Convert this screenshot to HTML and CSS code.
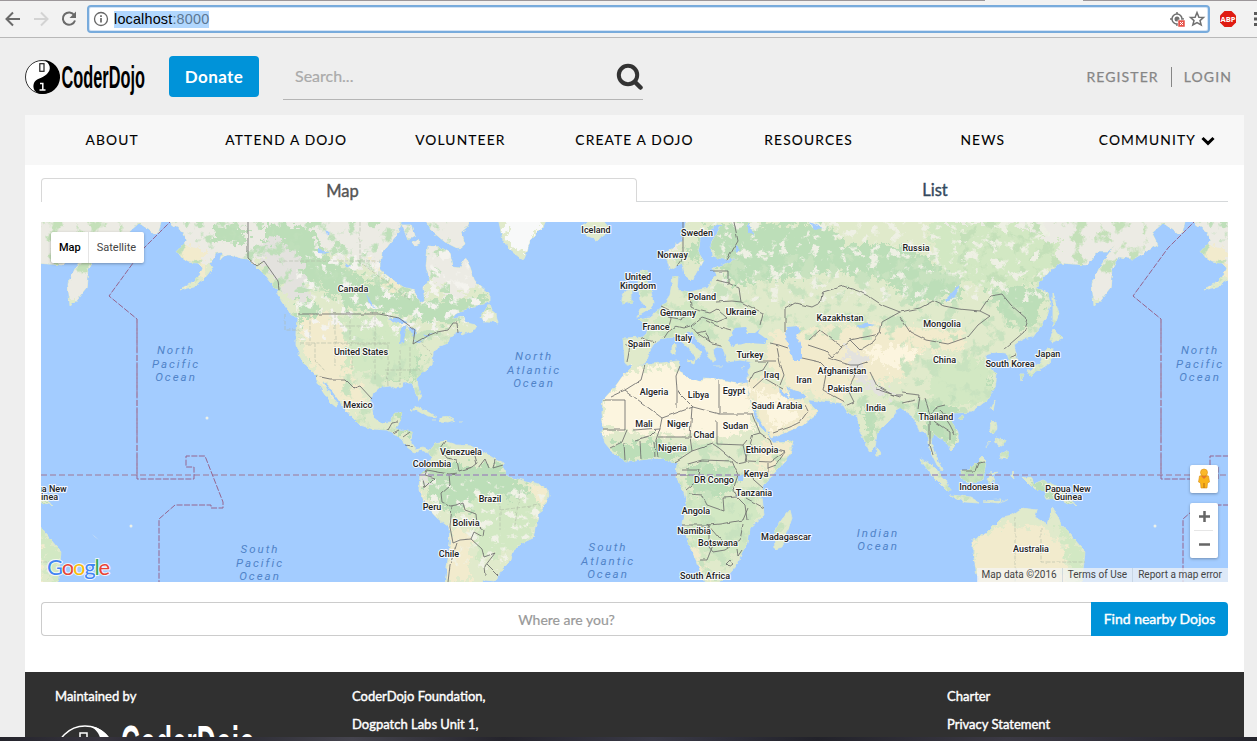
FILE: index.html
```html
<!DOCTYPE html>
<html lang="en">
<head>
<meta charset="utf-8">
<title>CoderDojo</title>
<link rel="stylesheet" href="styles.css">
</head>
<body>
<div class="browser">
  <svg class="nav-icons" width="84" height="36" viewBox="0 0 84 36" fill="none" stroke-width="2">
    <path d="M20 19H7M13 12.500L6.500 19L13 25.500" stroke="#6a6a6a"/>
    <path d="M34 19H47M41 12.500L47.500 19L41 25.500" stroke="#d3d3d3"/>
    <path d="M74.300 15.200A6.200 6.200 0 1 0 75 20.500" stroke="#6a6a6a"/>
    <path d="M76 11.500V18H69.500Z" fill="#6a6a6a"/>
  </svg>
  <div class="address">
    <svg width="16" height="16" viewBox="0 0 16 16" fill="none" stroke="#666"><circle cx="8" cy="8" r="6.500" stroke-width="1.300"/><path d="M8 7V11.500M8 4.300V6" stroke-width="1.700"/></svg>
    <span class="url">localhost<i>:8000</i></span>
    <svg class="address-tools" width="38" height="20" viewBox="0 0 38 20" fill="none" stroke="#707070">
      <circle cx="8" cy="10" r="5" stroke-width="1.500"/><path d="M8 3V5M1 10H3M13 10H15M8 15V17" stroke-width="1.500"/><circle cx="8" cy="10" r="2.500" fill="#707070" stroke="none"/>
      <rect x="9" y="11" width="7" height="7" fill="#e6534a" stroke="#fff" stroke-width=".5"/><path d="M11 13L14 16M14 13L11 16" stroke="#fff"/>
      <path d="M28 3.500L29.900 8.300 34.500 8.500 31 11.600 32.200 16 28 13.500 23.800 16 25 11.600 21.500 8.500 26.100 8.300Z" stroke-width="1.500"/>
    </svg>
  </div>
  <svg class="extensions" width="44" height="36" viewBox="0 0 44 36">
    <path d="M11.500 11H18.500L23 15.500V22.500L18.500 27H11.500L7 22.500V15.500Z" fill="#df1b12"/>
    <text x="15" y="22" class="abp">ABP</text>
    <g fill="#5a5a5a"><rect x="41" y="12" width="3" height="3"/><rect x="41" y="17.500" width="3" height="3"/><rect x="41" y="23" width="3" height="3"/></g>
  </svg>
</div>

<header class="header">
  <svg class="logo" width="122" height="40" viewBox="0 0 122 40">
    <circle cx="17" cy="18" r="16.500" fill="#fff" stroke="#000" stroke-width=".8"/>
    <path d="M19 1A17 17 0 0 1 17 35C10 35 7 29 9 24C11 19 17 20 22 15C27 10 25 4 19 1Z" fill="#000"/>
    <rect x="14.800" y="4.700" width="4.200" height="7.600" fill="none" stroke="#222" stroke-width="1.200"/>
    <path d="M15 24.500H17.800V30.500M14.500 31H20.500" stroke="#fff" stroke-width="1.500" fill="none"/>
    <text class="wordmark" x="36.500" y="30" textLength="83.500" lengthAdjust="spacingAndGlyphs" transform="matrix(1 0 0 1.300 0 -9.500)">CoderDojo</text>
  </svg>
  <a class="donate">Donate</a>
  <div class="search"><span>Search...</span>
    <svg width="28" height="28" viewBox="0 0 28 28" fill="none" stroke="#333"><circle cx="13" cy="12" r="9.200" stroke-width="4"/><path d="M20 19L25.500 24.500" stroke-width="4.500" stroke-linecap="round"/></svg>
  </div>
  <div class="account"><a>REGISTER</a><a>LOGIN</a></div>
</header>

<main class="page">
  <nav class="menu">
    <a>ABOUT</a><a>ATTEND A DOJO</a><a>VOLUNTEER</a><a>CREATE A DOJO</a><a>RESOURCES</a><a>NEWS</a>
    <a>COMMUNITY <svg width="14" height="10" viewBox="0 0 14 10"><path d="M1.500 2L7 7.300L12.500 2" fill="none" stroke="#000" stroke-width="3"/></svg></a>
  </nav>
  <div class="tabs"><a class="tab active">Map</a><a class="tab">List</a></div>

  <section class="map">
    <svg class="world" width="1187" height="360" viewBox="41 222 1187 360">
      <defs>
        <path id="land" d="M168 218L171 223 183 232 187 240 177 251 182 258 188 262 197 263 203 268 200 275 192 283 182 288 180 290 193 287 203 280 208 274 212 268 209 263 217 253 222 252 220 260 227 255 233 255 240 258 248 259 257 267 263 273 270 282 277 289 278 295 283 303 290 313 297 318 296 333 296 345 300 357 307 367 316 376 318 383 323 392 330 402 336 407 338 406 335 400 328 390 323 382 327 383 333 392 340 402 346 410 350 415 360 425 373 429 387 430 395 435 403 440 407 447 415 453 422 450 428 453 430 450 423 447 415 449 411 442 412 432 402 430 395 430 400 422 402 413 393 413 390 422 380 423 373 417 372 410 371 400 373 393 380 387 390 386 395 388 402 387 403 383 412 383 415 390 418 400 421 398 418 387 417 378 423 372 432 365 433 353 438 347 448 343 450 337 457 332 463 330 462 335 477 328 476 325 467 323 463 317 452 319 457 312 467 309 490 302 490 296 487 292 475 282 470 267 465 258 460 268 453 267 450 253 440 247 428 246 426 267 430 280 423 288 425 300 420 303 415 290 403 287 390 278 380 270 380 262 382 253 395 237 402 223 402 218Z
        M402 225L412 225 415 236 408 240ZM424 218L470 218 467 227 461 232 465 244 459 249 445 242 433 232ZM412 243L418 239 420 243 414 246ZM481 317L489 304 491 310 496 314 498 323 489 321 483 321Z
        M498 218L503 240 510 250 523 260 527 251 530 240 543 227 547 218ZM581 226L588 222H605L612 230 597 240 587 236Z
        M428 452L432 458 427 468 420 475 419 490 427 507 437 518 449 527 450 543 447 567 445 586 482 586 484 580 495 581 500 573 510 560 512 552 522 543 533 538 538 515 549 497 548 489 538 484 522 480 512 478 505 475 503 463 493 458 485 453 473 446 457 445 445 441 435 443Z
        M410 410L417 407 429 412 437 417 428 416 418 410ZM440 418L447 416 454 420 448 422 440 421ZM432 420L436 420M459 421L463 421
        M632 367L643 365 653 364 678 361 680 366 678 372 687 377 700 383 703 378 718 379 737 383 747 383 748 393 753 413 758 425 768 435 773 442 794 441 790 455 777 470 763 485 762 497 764 515 750 528 748 543 742 552 738 563 723 580 705 584 697 562 690 547 682 523 687 503 683 490 676 475 677 463 670 462 662 458 648 459 627 462 615 455 605 443 602 433 603 422 602 413 603 400 615 387 622 377Z
        M790 510L792 518 782 547 775 549 774 532 783 518Z
        M625 363L623 338 645 337 647 327 638 319 650 317 662 307 670 295 673 277 678 276 677 290 690 292 708 288 712 280 717 275 713 268 728 263 738 258 723 259 712 257 711 243 722 225 718 224 700 240 698 252 703 260 695 275 690 281 685 274 682 263 670 270 665 253 682 240 687 218H1186L1182 233 1178 234 1172 229 1163 223 1152 233 1158 245 1145 252 1133 259 1120 257 1112 270 1110 288 1098 303 1094 306 1092 283 1102 263 1115 245 1107 252 1097 252 1087 265 1060 263 1047 273 1035 288 1048 292 1050 305 1047 317 1033 337 1022 339 1014 345 1018 362 1010 367 1006 353 997 352 985 355 988 363 997 375 995 387 988 400 983 403 972 412 953 413 949 418 958 432 958 442 950 450 948 443 942 440 933 433 932 447 943 472 937 465 930 450 928 433 920 432 913 417 900 407 890 420 877 433 875 447 870 452 860 432 857 415 848 413 842 403 830 402 810 400 803 393 787 387 790 397 794 400 804 399 807 396 812 406 818 412 803 425 772 438 760 420 753 407 748 388 748 370 752 362 740 360 727 362 723 348 718 347 712 350 716 360 712 362 705 348 692 333 686 332 690 342 702 353 696 360 693 352 682 342 675 337 665 338 655 342 650 350 645 363 634 367Z
        M637 317L640 309 646 307 640 300 638 280 642 270 648 272 647 281 651 292 653 303 650 309ZM622 299L625 291 632 290 632 302 622 304ZM672 347L675 343 675 354 672 354ZM687 361L695 360 694 364ZM714 366H722M741 368L746 367
        M1053 292L1056 305 1059 313 1056 322 1053 326ZM1050 340L1054 329 1062 338 1052 343ZM1048 348L1053 349 1050 363 1042 368 1030 374 1028 371 1040 364ZM1020 374L1024 374 1021 381ZM1028 373L1034 372 1030 376Z
        M876 447L881 454 877 457ZM920 459L932 465 946 480 951 491 947 491 934 478ZM950 495L970 497 980 503 965 502ZM960 471L969 470 982 457 986 461 983 480 968 483 962 479ZM991 473L998 472 992 475 996 482 991 480 990 486 988 480ZM1023 478L1031 477 1034 484 1043 480 1060 488 1067 498 1077 505 1068 503 1060 499 1047 499 1045 492 1033 488ZM983 501L1001 500 999 503ZM1000 503L1008 499M991 422L996 421 997 429 993 434 990 430ZM1000 455L1008 450 1008 457 1001 459ZM995 438L1005 440 1003 446 997 445ZM985 448L990 442M958 418L963 415 962 420ZM991 409L995 401 993 411ZM1012 471L1014 479 1011 476ZM1073 490L1081 496
        M973 540L987 533 1003 517 1012 515 1022 508 1037 510 1035 517 1047 525 1053 508 1062 525 1075 540 1085 552 1083 570 1081 586H979L973 553Z"/>
        <clipPath id="land-clip"><use href="#land"/></clipPath>
        <filter id="rough" x="-10%" y="-10%" width="120%" height="120%"><feTurbulence type="fractalNoise" baseFrequency=".16" numOctaves="3" seed="4"/><feDisplacementMap in="SourceGraphic" scale="22" xChannelSelector="R" yChannelSelector="G"/></filter>
        <filter id="coast" x="0" y="0" width="1300" height="650" filterUnits="userSpaceOnUse"><feTurbulence type="fractalNoise" baseFrequency=".2" numOctaves="2" seed="2"/><feDisplacementMap in="SourceGraphic" scale="4" xChannelSelector="R" yChannelSelector="G"/></filter>
        <filter id="wobble" x="0" y="0" width="1300" height="650" filterUnits="userSpaceOnUse"><feTurbulence type="fractalNoise" baseFrequency=".12" numOctaves="1" seed="2"/><feDisplacementMap in="SourceGraphic" scale="3" xChannelSelector="R" yChannelSelector="G"/></filter>
        <filter id="specks" x="0" y="0" width="100%" height="100%"><feTurbulence type="fractalNoise" baseFrequency=".07" numOctaves="5" seed="9"/><feColorMatrix values="0 0 0 0 0  0 0 0 0 0  0 0 0 0 0  9 0 0 0 -4.900"/><feComposite in="SourceGraphic" operator="in"/></filter>
        <filter id="specks-fine" x="0" y="0" width="100%" height="100%"><feTurbulence type="fractalNoise" baseFrequency=".1" numOctaves="5" seed="21"/><feColorMatrix values="0 0 0 0 0  0 0 0 0 0  0 0 0 0 0  0 9 0 0 -5.100"/><feComposite in="SourceGraphic" operator="in"/></filter>
        <g id="globe">
          <g filter="url(#coast)">
          <use href="#land" fill="#e0eacb" stroke="#e0eacb" stroke-width=".8"/>
          <g clip-path="url(#land-clip)">
            <g filter="url(#rough)">
              <path fill="#ecebe4" d="M160 215H475L480 285 450 300 425 270 425 300 350 262 300 240 250 265 205 265 175 245ZM930 215H1200V300H1080L1060 262 1000 255 950 235ZM650 215H690L670 265Z"/>
              <path fill="#f8f9f9" d="M500 215H547L525 256 507 240Z"/>
              <path fill="#bcdeb8" d="M265 222L310 228 330 262 380 285 425 300 490 295 480 315 440 325 400 315 350 308 315 285 280 275 265 245ZM296 298L320 305 324 330 304 360ZM215 224L250 230 245 245 215 240ZM705 225L760 222 825 225 850 245 905 245 935 265 960 265 960 300 925 300 910 305 885 280 835 272 790 278 735 285 715 262ZM680 255L705 235 700 262ZM980 280L1050 290 1030 330 1010 325ZM420 465H500L530 490 525 530 500 530 490 500 455 515 430 500ZM685 465H730L740 480 720 497 690 490ZM610 443H670L680 460 620 462ZM385 345L400 360 425 355 415 380 385 382ZM960 460H990V485H955ZM1030 480L1075 500 1040 500ZM920 400L960 410 955 445 930 440ZM775 275H800ZM400 413H412V435H395ZM966 370L995 375 990 400 965 400ZM860 405L880 405 870 445Z"/>
              <path fill="#d2e8c3" d="M925 222H1010L1060 245 1045 280 990 290 940 270ZM340 315H385L420 345 410 380 345 370ZM470 500L540 495 530 545 480 560ZM690 495L760 500 750 550 710 560 690 540ZM640 330L690 300 720 320 700 340ZM935 360H990V405H925ZM1055 515L1085 555V582H1075Z"/>
              <path fill="#f2ebcd" d="M301 320L325 312 345 330 348 372 368 400 355 412 325 388 302 350ZM775 330L870 325 960 330 968 350 920 350 900 380 850 380 845 402 790 390 765 360ZM742 380L760 378 820 410 800 428 770 440ZM973 540L1003 525 1045 528 1065 550V586H978ZM448 525L470 530 470 580H446ZM180 245L205 250 205 275 180 290ZM527 480L550 490 540 510ZM765 440H795L775 475 755 465ZM370 260L400 280 420 290 385 285ZM420 485L430 512 420 505ZM685 540L700 555 710 582 690 560Z"/>
              <path fill="#fcf5df" d="M620 372L670 366 748 382 755 430 720 438 605 430 602 405ZM865 352L905 345 920 355 900 368 880 364ZM755 390L785 398 800 420 775 430Z"/>
              <path fill="#e3e2de" d="M275 235L300 255 310 300 290 300 255 250ZM843 345L862 355 868 380 900 395 880 396 855 380ZM422 472L432 475 422 488Z"/>
            </g>
            <rect x="170" y="222" width="280" height="70" fill="#bfdfba" filter="url(#specks)"/>
            <rect x="960" y="222" width="205" height="60" fill="#c4e0b9" filter="url(#specks)"/>
            <rect x="296" y="250" width="200" height="90" fill="#f4f3ee" filter="url(#specks-fine)"/>
            <rect x="700" y="222" width="350" height="80" fill="#eef0e4" filter="url(#specks-fine)"/>
            <rect x="420" y="480" width="130" height="90" fill="#f0f2e6" filter="url(#specks-fine)"/>
            <rect x="620" y="255" width="340" height="85" fill="#c8e2bf" filter="url(#specks)"/>
            <rect x="900" y="300" width="160" height="200" fill="#c8e2bf" filter="url(#specks)"/>
            <rect x="340" y="330" width="110" height="140" fill="#c8e2bf" filter="url(#specks)"/>
            <rect x="675" y="440" width="120" height="140" fill="#c8e2bf" filter="url(#specks)"/>
            <rect x="845" y="395" width="110" height="60" fill="#c2dfbb" filter="url(#specks)"/>
          </g>
          <g fill="#a3ccff">
            <path d="M735 328L745 327 748 333 755 333 760 329 758 333 768 340 765 344 747 343 732 346 728 341ZM788 327L798 326 800 331 796 335 802 347 802 360 792 360 790 350 785 338Z"/>
            <path d="M388 319L400 317 408 323 397 323ZM401 328L407 326 403 343 400 344ZM408 327L416 329 415 337 411 334ZM413 342L424 339 418 343ZM423 335L433 333 426 337ZM365 292L375 308 369 303ZM318 248L330 254 318 253ZM325 230L330 234 327 236ZM345 262L351 266 347 268ZM945 300L960 284 956 295 947 302ZM748 222L754 235 748 232ZM735 245L740 250 736 254ZM738 476L744 474 743 481 738 481ZM857 327L865 323 875 325 860 328ZM778 391L780 389 790 398 787 399ZM810 222L823 228 814 230Z"/>
          </g>
          </g>
          <g class="borders" filter="url(#wobble)">
            <path d="M248 222V258L257 266 264 261 278 281 279 290M298 314H379L399 318 415 330 413 344 425 337 437 332 448 330 453 323 457 323 458 333M316 376L330 379 345 379 354 388 360 386 372 399M388 430L392 423 398 422M393 433L399 430M403 437L410 432M405 445L412 446"/>
            <path d="M445 441L440 448 447 458 457 460 459 471 472 467 477 463 473 449M457 473L449 474 427 470 425 475 435 478 425 488 423 480M449 474L450 485 441 493 442 502 450 506 456 505 463 502 465 510 476 514 477 525 484 530 483 537 474 532 471 539 460 540 453 543 450 527 452 506M471 539L482 549 484 557 495 553 485 566 486 576M487 564L498 575M478 468L485 459 489 468M495 459L493 468 503 465M457 543L450 565 448 582"/>
            <path d="M641 337L646 340 656 342M625 345H630L627 362M664 338L668 332 676 326 684 328 690 326M661 306L669 310 671 319 669 326M668 317L680 319 691 314 697 310 691 307 690 293M697 310L710 313 717 309 727 318 717 322 702 317 691 326 697 333 712 343 722 345M697 333L705 331 710 342M705 320L717 326 731 330M716 302L732 301 741 302 739 288 728 283 716 280M741 302L763 313 760 325M710 271H728V285M683 222V257L677 266M734 222L738 241 727 260M785 332L785 309 795 303 812 307 820 303 823 292 843 286 858 291 870 297 882 305 900 312 920 308 933 301 944 306 959 309 980 311 990 316 978 325 968 337 948 344 926 340 910 332 900 317M900 312L882 322 880 334 850 340 842 347 820 330 809 340M842 347L832 358 826 351 808 345M850 340L860 350 873 342 879 335M802 358L820 362 827 369 823 390 845 402M827 358L850 365 858 365 867 362M858 365L853 380 848 390 854 402 845 406M870 372L877 386 893 395 902 395M876 389L900 397M902 393L920 395 918 409M925 398L930 415 937 407 945 405M902 403L915 400M980 311L990 296 1002 294 1011 305 1028 320 1024 332 1003 350M1010 357L1016 355"/>
            <path d="M770 343L779 345 788 348M777 347L780 363 784 375 780 385M755 361H776M768 362L763 370 754 373 749 382M753 388L764 378 783 389M773 433L790 427 800 422 808 411 805 405M930 415L935 422 950 432 950 440M930 422V445L933 455M940 410L950 425 955 435M962 471L975 471 978 463 985 462M937 418L945 415"/>
            <path d="M645 365L641 380 625 390 610 397M625 390L662 418 693 407 677 391 676 376 680 366M677 391V408M719 380V414H752M693 407L719 414M603 400H625V430H603M633 430L660 428 662 418M660 428L656 440 658 457M610 448L622 442 627 430M624 443L625 460M635 440L650 436 656 430M640 441L641 459M654 441L655 457M658 437H690L692 451 675 462M692 407L690 437M692 451L713 444 719 448 737 463 747 461 743 445 747 440M717 420V444L743 445M752 413L760 433 753 435 745 461M760 433L770 440 773 448 785 451 770 462 748 461M688 464L702 460 732 461 738 475 733 490 737 497 723 498 724 511 707 505 702 495 689 494M676 475H690M682 470H700L698 480 686 490M768 463V477M746 473L763 488M746 498L764 508M737 497L745 505 747 520M682 525H708L720 524 743 520 748 508M709 524V547L713 552 725 550 740 540 743 524M707 524L724 544M713 545L707 560H700M737 549L738 556 742 550M726 564L730 560 733 564 729 567ZM785 452L776 465 768 468"/>
            <path class="provinces" d="M278 261H380M285 315V330H300M310 315V345M335 314V366M300 343H390M350 314V340M340 355H388M352 343V370M340 326H375M375 315V380M388 345V375M385 370H420M388 386L387 372M400 350V385M410 347V375M420 340L432 355M315 343L315 360 326 372M335 344H388M360 222V262L410 300M1015 517V582M1041 528V562H1085M500 495V530M520 490L515 525M500 510L540 505"/>
          </g>
        </g>
      </defs>
      <rect x="41" y="222" width="1187" height="360" fill="#a3ccff"/>
      <use href="#globe"/><use href="#globe" x="-1024"/><use href="#globe" x="1024"/>
      <g fill="#edf1e8"><circle cx="207" cy="418" r="1.500"/><circle cx="131" cy="526" r="1.500"/><circle cx="1155" cy="526" r="1.500"/><path d="M92 534L99 540 95 537ZM1116 534L1124 540 1120 537Z"/></g>
      <g class="zones">
        <path class="equator" d="M41 475H1228"/>
        <g id="dateline"><path d="M173 219L144 248 109 296 137 319V479H194V467H186V456H205L223 502V508H211V505H175L159 519V582"/><path class="equator" d="M137 319V475"/></g>
        <use href="#dateline" x="1024"/>
      </g>
      <g class="countries" transform="translate(0 -.8)">
        <text x="353" y="292.500">Canada</text><text x="361" y="355.500">United States</text><text x="358" y="408.500">Mexico</text><text x="461" y="455.500">Venezuela</text><text x="432" y="467.500">Colombia</text><text x="490" y="502.500">Brazil</text><text x="432" y="510.500">Peru</text><text x="466" y="526.500">Bolivia</text><text x="449" y="557.500">Chile</text>
        <text x="596" y="233.500">Iceland</text><text x="697" y="236.500">Sweden</text><text x="672.500" y="258.500">Norway</text><text x="638" y="280.500">United</text><text x="638" y="289.500">Kingdom</text><text x="702" y="300.500">Poland</text><text x="678" y="316.500">Germany</text><text x="741" y="315.500">Ukraine</text><text x="656" y="330.500">France</text><text x="683.500" y="341.500">Italy</text><text x="639" y="347.500">Spain</text><text x="750" y="358.500">Turkey</text>
        <text x="654" y="395.500">Algeria</text><text x="698.500" y="398.500">Libya</text><text x="734" y="394.500">Egypt</text><text x="771.500" y="378.500">Iraq</text><text x="804" y="383.500">Iran</text><text x="842" y="374.500">Afghanistan</text><text x="845" y="392.500">Pakistan</text><text x="777" y="409.500">Saudi Arabia</text><text x="876" y="411.500">India</text><text x="840" y="321.500">Kazakhstan</text><text x="916" y="251.500">Russia</text><text x="942" y="327.500">Mongolia</text><text x="944.500" y="363.500">China</text><text x="1010" y="367.500">South Korea</text><text x="1048" y="357.500">Japan</text><text x="936" y="420.500">Thailand</text>
        <text x="644" y="427.500">Mali</text><text x="678" y="427.500">Niger</text><text x="704" y="438.500">Chad</text><text x="735.500" y="429.500">Sudan</text><text x="672.500" y="451.500">Nigeria</text><text x="762" y="453.500">Ethiopia</text><text x="756" y="477.500">Kenya</text><text x="714" y="483.500">DR Congo</text><text x="754" y="496.500">Tanzania</text><text x="696" y="514.500">Angola</text><text x="694" y="534.500">Namibia</text><text x="718" y="546.500">Botswana</text><text x="786" y="540.500">Madagascar</text><text x="705" y="579.500">South Africa</text>
        <text x="979" y="490.500">Indonesia</text><text x="1068" y="492.500">Papua New</text><text x="1068" y="500.500">Guinea</text><text x="1031" y="552.500">Australia</text><text x="44" y="492.500">Papua New</text><text x="44" y="500.500">Guinea</text>
      </g>
      <g class="oceans">
        <text x="176" y="354">North</text><text x="176" y="368">Pacific</text><text x="176" y="381">Ocean</text>
        <text x="1200" y="354">North</text><text x="1200" y="368">Pacific</text><text x="1200" y="381">Ocean</text>
        <text x="534" y="360">North</text><text x="534" y="374">Atlantic</text><text x="534" y="387">Ocean</text>
        <text x="260" y="553">South</text><text x="260" y="567">Pacific</text><text x="260" y="580">Ocean</text>
        <text x="608" y="551">South</text><text x="608" y="565">Atlantic</text><text x="608" y="578">Ocean</text>
        <text x="878" y="537">Indian</text><text x="878" y="550">Ocean</text>
      </g>
      <text class="google" x="47" y="575" textLength="63"><tspan fill="#4285f4">G</tspan><tspan fill="#ea4335">o</tspan><tspan fill="#fbbc05">o</tspan><tspan fill="#4285f4">g</tspan><tspan fill="#34a853">l</tspan><tspan fill="#ea4335">e</tspan></text>
    </svg>
    <div class="map-type"><b>Map</b><span>Satellite</span></div>
    <div class="map-controls">
      <div class="pegman"><svg width="14" height="22" viewBox="0 0 14 22"><path d="M2.500 8Q7 6 11.500 8L12.500 14 10.500 15 10 20H4L3.500 15 1.500 14Z" fill="#fbb41b" stroke="#d98e18" stroke-width=".6"/><circle cx="7" cy="4.500" r="3.500" fill="#fbb829" stroke="#d98e18" stroke-width=".6"/><path d="M4 8L7 11 10 8Z" fill="#e5792d"/><path d="M7 15V20" stroke="#b96a13"/></svg></div>
      <div class="zoom"><svg width="28" height="55" viewBox="0 0 28 55" stroke="#666"><path d="M9 13.500H20M14.500 8V19M9 41.500H20" stroke-width="2.500"/><path d="M4 27.500H23" stroke="#e6e6e6"/></svg></div>
    </div>
    <div class="credits"><span>Map data ©2016</span><span>Terms of Use</span><span>Report a map error</span></div>
  </section>

  <div class="locate"><span class="place">Where are you?</span><a class="find">Find nearby Dojos</a></div>

  <footer class="footer">
    <div><p>Maintained by</p>
      <svg class="footer-logo" width="205" height="24" viewBox="0 0 205 24"><circle cx="27" cy="33" r="29" fill="#303030" stroke="#fff" stroke-width="1.500"/><path d="M31 4C45 5 55 16 56 30L39 30C46 20 42 8 31 4Z" fill="#fff"/><rect x="22" y="11" width="7" height="14" fill="none" stroke="#fff" stroke-width="1.500"/><text class="wordmark light" x="66" y="0" textLength="134" lengthAdjust="spacingAndGlyphs" transform="matrix(1 0 0 1.500 -3 39)">CoderDojo</text></svg>
    </div>
    <div><p>CoderDojo Foundation,</p><p>Dogpatch Labs Unit 1,</p></div>
    <div></div>
    <div><p>Charter</p><p>Privacy Statement</p></div>
  </footer>
</main>
<div class="desktop"></div>
</body>
</html>
```
FILE: styles.css
```css
* { box-sizing: border-box; }
body { margin: 0; width: 1257px; height: 741px; overflow: hidden; background: #eee; font-family: Lato, sans-serif; display: flex; flex-direction: column; }
.browser { height: 38px; flex: none; display: flex; align-items: flex-start; background: #f2f2f2; border-bottom: 1px solid #b8b8b8; background-image: linear-gradient(90deg, #9c979a 985px, transparent 985px, transparent 1083px, #9c979a 1083px); background-size: 100% 1px; background-repeat: no-repeat; }
.nav-icons { flex: none; }
.address { margin: 5px 0 0 3px; width: 1123px; height: 28px; border: 2px solid #78abdc; border-radius: 4px; background: #fff; display: flex; align-items: center; padding: 0 1px 0 4px; box-shadow: inset 0 0 0 1px #d3e3f5; }
.url { margin-left: 5px; height: 17px; background: #b1d7fe; font: 14.4px/17px "Liberation Sans", sans-serif; letter-spacing: .18px; color: #000; }
.url i { font-style: normal; color: #5c7893; }
.address-tools { margin-left: auto; }
.extensions { margin-left: 3px; flex: none; }
.abp { font: bold 7.5px "Open Sans", sans-serif; fill: #fff; text-anchor: middle; }
.header { height: 77px; flex: none; display: flex; align-items: flex-start; padding: 18px 25px 0; }
.logo { margin-top: 3px; }
.wordmark { font: bold 24px "Liberation Sans", sans-serif; fill: #000; }
.donate { margin-left: 22px; width: 90px; height: 41px; border-radius: 4px; background: #0093d9; color: #fff; font-weight: 700; font-size: 17px; letter-spacing: .4px; line-height: 42px; text-align: center; }
.search { margin-left: 24px; width: 360px; height: 44px; border-bottom: 1px solid #b5b5b5; color: #aaa; font-size: 16px; display: flex; justify-content: space-between; padding: 7px 0 0 12px; }
.search span { line-height: 26px; -webkit-text-stroke: .2px #aaa; }
.account { margin: 11px -12px 0 auto; display: flex; color: #868686; font-size: 14px; letter-spacing: 1.1px; line-height: 20px; -webkit-text-stroke: .25px #868686; }
.account a { padding: 0 12px; }
.account a + a { border-left: 1px solid #868686; }
.page { width: 1219px; height: 622px; flex: none; margin-left: 25px; background: #fff; overflow: hidden; }
.menu { height: 50px; background: #f7f7f7; display: grid; grid-template-columns: repeat(7, 1fr); text-align: center; line-height: 50px; font-size: 13.8px; letter-spacing: 1.13px; color: #000; -webkit-text-stroke: .1px #000; }
.menu svg { margin: 0 0 -1px 1px; }
.tabs { margin: 13px 16px 20px; height: 24px; display: flex; }
.tab { flex: 1; border-bottom: 1px solid #d5d8da; font-size: 16.5px; line-height: 25px; text-align: center; color: #34495e; -webkit-text-stroke: .4px; padding-left: 5px; }
.tab.active { flex: 0 0 596px; border: 1px solid #d8d8d8; border-bottom: 0; border-radius: 4px 4px 0 0; color: #555; line-height: 24px; padding-left: 7px; }
.map { position: relative; margin: 0 16px; height: 360px; font-family: Roboto, sans-serif; overflow: hidden; }
.world { display: block; }
.borders { fill: none; stroke: #6d6d6d; stroke-width: .85; }
.borders .provinces { stroke: #aeb9a5; stroke-width: .6; stroke-dasharray: 4 1.5; }
.zones { fill: none; stroke: #95658e; stroke-width: 1; stroke-dasharray: 6 1.5; }
.zones .equator { stroke: #a192b9; stroke-width: 1.7; stroke-dasharray: 6 3; }
.countries { font: 500 9px Roboto, sans-serif; fill: #222; text-anchor: middle; stroke: #fff; stroke-opacity: .85; stroke-width: 2.2px; stroke-linejoin: round; paint-order: stroke; }
.oceans { font: italic 11.5px Roboto, sans-serif; letter-spacing: 2px; fill: #5083c8; text-anchor: middle; }
.google { font: 22px Lato, sans-serif; stroke: #fff; stroke-opacity: .8; stroke-width: 2px; paint-order: stroke; }
.google tspan { -webkit-text-stroke: 0; }
.map-type { position: absolute; left: 10px; top: 10px; height: 31px; display: flex; background: #fff; border-radius: 2px; box-shadow: 0 1px 3px rgba(0,0,0,.3); font-size: 11px; line-height: 31px; color: #444; }
.map-type b { padding: 0 7px 0 8px; font-weight: 500; color: #000; border-right: 1px solid #e5e5e5; }
.map-type span { padding: 0 8px; }
.map-controls { position: absolute; right: 10px; top: 243px; display: flex; flex-direction: column; gap: 10px; }
.pegman, .zoom { width: 28px; height: 28px; border-radius: 2px; background: #fff; box-shadow: 0 1px 3px rgba(0,0,0,.3); }
.pegman { padding: 3px 7px; }
.zoom { height: 55px; }
.credits { position: absolute; right: 0; bottom: 0; height: 14px; display: flex; background: rgba(245,245,245,.7); font-size: 10px; letter-spacing: .02px; line-height: 14px; color: #444; }
.credits span { padding: 0 5px; white-space: nowrap; }
.credits span:last-child { padding-right: 6px; }
.credits span + span { border-left: 1px solid rgba(180,195,210,.5); }
.locate { margin: 20px 16px 36px; height: 34px; display: flex; font-size: 14px; }
.place { flex: 1; border: 1px solid #ccc; border-right: 0; border-radius: 4px 0 0 4px; line-height: 34px; text-align: center; color: #999; -webkit-text-stroke: .2px #999; }
.find { width: 137px; background: #0093d9; color: #fff; border-radius: 0 4px 4px 0; text-align: center; line-height: 34px; -webkit-text-stroke: .4px #fff; }
.footer { height: 65px; background: #303030; color: #fff; padding: 10px 30px 0; display: grid; grid-template-columns: 297px 298px 297px 1fr; font-size: 13px; line-height: 28px; -webkit-text-stroke: .4px #fff; }
.footer p { margin: 0; }
.footer-logo { display: block; margin: 12px 0 0 3px; }
.wordmark.light { fill: #fff; stroke: none; font-size: 33px; }
.desktop { flex: 1; background: linear-gradient(90deg, #24242c, #37343e 8%, #22222a 15%, #45444e 28%, #25242c 40%, #393946 52%, #22222a 65%, #3b3944 80%, #24242c); }
```
